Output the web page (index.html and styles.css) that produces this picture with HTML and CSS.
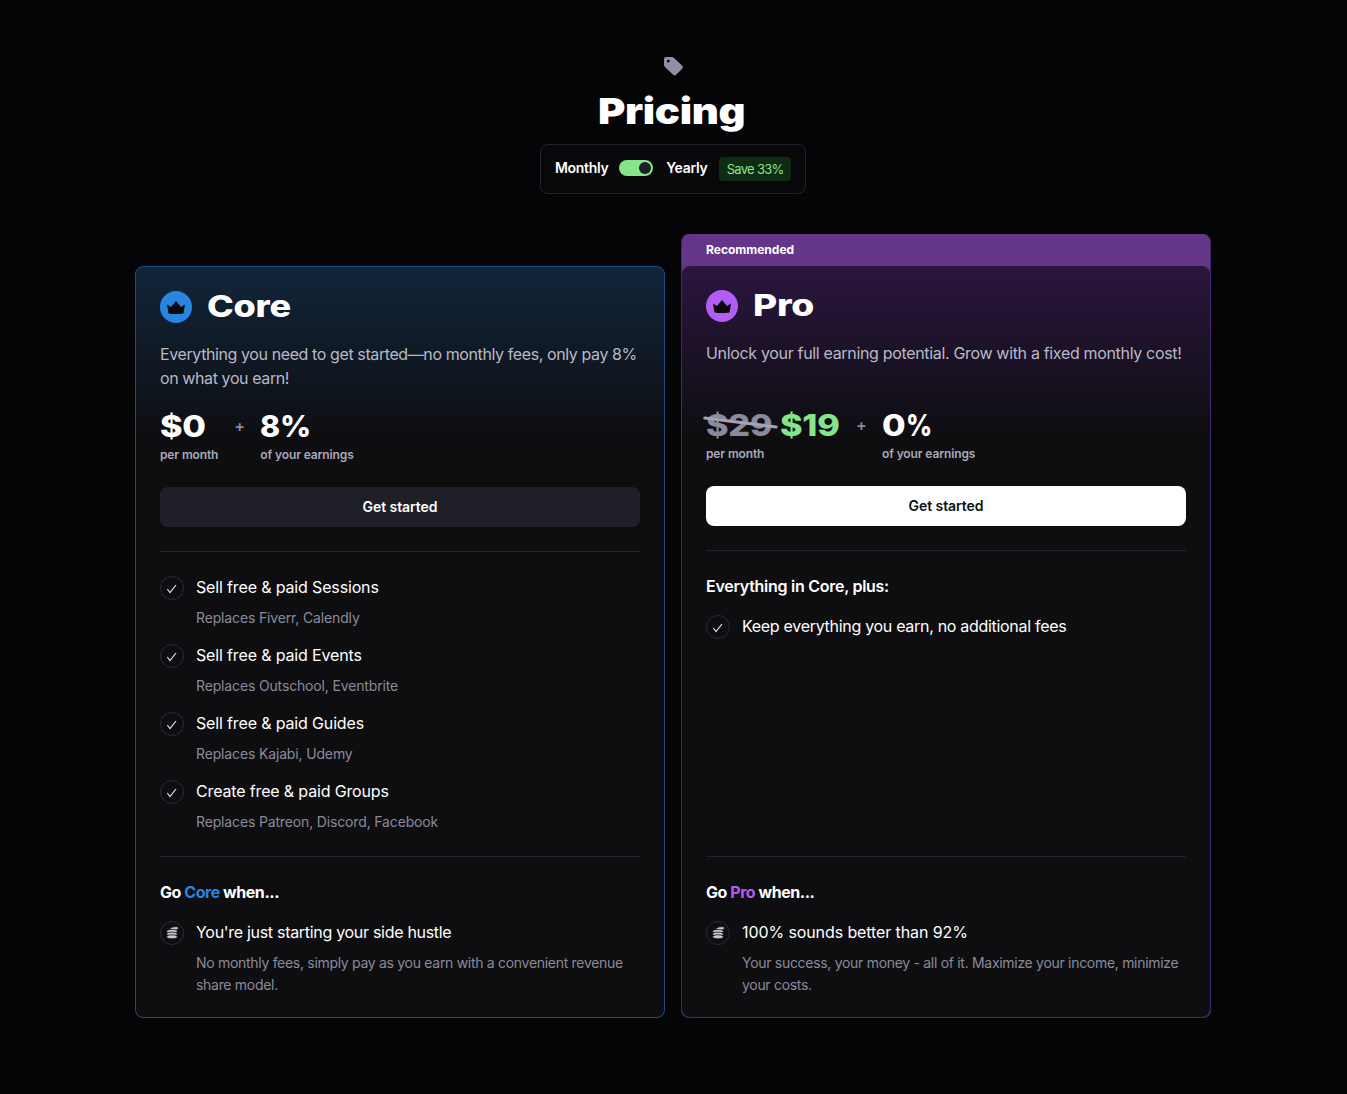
FILE: index.html
```html
<!DOCTYPE html>
<html lang="en">
<head>
<meta charset="utf-8">
<title>Pricing</title>
<link rel="stylesheet" href="styles.css">
</head>
<body>
<main class="page">
  <header class="head">
    <svg class="tag" width="20" height="20" viewBox="0 0 20 20"><path fill-rule="evenodd" d="M0 3a2 2 0 0 1 2-2h6a3 3 0 0 1 2 .9l8 7.600a2.400 2.400 0 0 1 0 3.400l-5.700 5.700a2.400 2.400 0 0 1-3.400 0L.9 11A3 3 0 0 1 0 9zM4.300 3.700a1.400 1.400 0 1 0 0 2.800 1.400 1.400 0 0 0 0-2.800z"/></svg>
    <h1 class="title"><span class="wide">Pricing</span></h1>
    <div class="billing">
      <span class="billing-label">Monthly</span>
      <span class="switch"><span class="knob"></span></span>
      <span class="billing-label yearly">Yearly</span>
      <span class="save">Save 33%</span>
    </div>
  </header>

  <section class="plans">
    <article class="card core">
      <div class="top">
        <div class="plan-name">
          <svg class="crown" width="32" height="32" viewBox="0 0 32 32"><circle class="disc-blue" cx="16" cy="16" r="16"/><path class="crown-shape" d="M8.500 22.500 7 13.500l4 2.500 5-6 5 6 4-2.500-1.500 9c-5 .7-10 .7-15 0z"/></svg>
          <h2 class="name"><span class="wide">Core</span></h2>
        </div>
        <p class="desc desc-core">Everything you need to get started—no monthly fees, only pay 8% on what you earn!</p>
        <div class="prices">
          <div class="price-block">
            <div class="amount"><span class="wide">$0</span></div>
            <div class="unit">per month</div>
          </div>
          <span class="plus">+</span>
          <div class="price-block">
            <div class="amount"><span class="narrow">8%</span></div>
            <div class="unit">of your earnings</div>
          </div>
        </div>
        <a class="btn btn-dark">Get started</a>
      </div>
      <hr class="rule">
      <ul class="features">
        <li class="feature"><div class="row row-tight"><svg class="tick" width="24" height="24" viewBox="0 0 24 24"><circle cx="12" cy="12" r="11.500"/><path d="m7.300 13 2.700 3.500 6-7.500"/></svg><span class="label">Sell free &amp; paid Sessions</span></div><p class="sub">Replaces Fiverr, Calendly</p></li>
        <li class="feature"><div class="row row-tight"><svg class="tick" width="24" height="24" viewBox="0 0 24 24"><circle cx="12" cy="12" r="11.500"/><path d="m7.300 13 2.700 3.500 6-7.500"/></svg><span class="label">Sell free &amp; paid Events</span></div><p class="sub">Replaces Outschool, Eventbrite</p></li>
        <li class="feature"><div class="row row-tight"><svg class="tick" width="24" height="24" viewBox="0 0 24 24"><circle cx="12" cy="12" r="11.500"/><path d="m7.300 13 2.700 3.500 6-7.500"/></svg><span class="label">Sell free &amp; paid Guides</span></div><p class="sub">Replaces Kajabi, Udemy</p></li>
        <li class="feature"><div class="row row-tight"><svg class="tick" width="24" height="24" viewBox="0 0 24 24"><circle cx="12" cy="12" r="11.500"/><path d="m7.300 13 2.700 3.500 6-7.500"/></svg><span class="label">Create free &amp; paid Groups</span></div><p class="sub">Replaces Patreon, Discord, Facebook</p></li>
      </ul>
      <div class="when">
        <hr class="rule rule-when">
        <h3 class="when-title">Go <span class="blue">Core</span> when...</h3>
        <div class="row"><svg class="coins" width="24" height="24" viewBox="0 0 24 24"><circle class="ring" cx="12" cy="12" r="11.500"/><g class="stack"><ellipse cx="14" cy="7.800" rx="4.500" ry="2" transform="rotate(-12 14 7.800)"/><ellipse cx="12" cy="10.400" rx="5.500" ry="2"/><ellipse cx="12" cy="13.100" rx="5.500" ry="2"/><ellipse cx="12" cy="15.800" rx="5.500" ry="2"/></g></svg><span class="label">You're just starting your side hustle</span></div>
        <p class="sub sub-long">No monthly fees, simply pay as you earn with a convenient revenue share model.</p>
      </div>
    </article>

    <article class="card pro">
      <div class="ribbon">Recommended</div>
      <div class="pro-body">
        <div class="top">
          <div class="plan-name">
            <svg class="crown" width="32" height="32" viewBox="0 0 32 32"><circle class="disc-purple" cx="16" cy="16" r="16"/><path class="crown-shape" d="M8.500 22.500 7 13.500l4 2.500 5-6 5 6 4-2.500-1.500 9c-5 .7-10 .7-15 0z"/></svg>
            <h2 class="name"><span class="wide">Pro</span></h2>
          </div>
          <p class="desc">Unlock your full earning potential. Grow with a fixed monthly cost!</p>
          <div class="prices">
            <div class="price-block">
              <div class="amount amount-pair">
                <span class="old"><span class="wide">$29</span><span class="strike"></span></span>
                <span class="new"><span class="wide">$19</span></span>
              </div>
              <div class="unit">per month</div>
            </div>
            <span class="plus">+</span>
            <div class="price-block">
              <div class="amount"><span class="wide zero">0</span><span class="narrow pct">%</span></div>
              <div class="unit">of your earnings</div>
            </div>
          </div>
          <a class="btn btn-light">Get started</a>
        </div>
        <hr class="rule">
        <h3 class="plus-title">Everything in Core, plus:</h3>
        <div class="row"><svg class="tick" width="24" height="24" viewBox="0 0 24 24"><circle cx="12" cy="12" r="11.500"/><path d="m7.300 13 2.700 3.500 6-7.500"/></svg><span class="label">Keep everything you earn, no additional fees</span></div>
        <div class="when when-pro">
          <hr class="rule rule-when">
          <h3 class="when-title">Go <span class="purple">Pro</span> when...</h3>
          <div class="row"><svg class="coins" width="24" height="24" viewBox="0 0 24 24"><circle class="ring" cx="12" cy="12" r="11.500"/><g class="stack"><ellipse cx="14" cy="7.800" rx="4.500" ry="2" transform="rotate(-12 14 7.800)"/><ellipse cx="12" cy="10.400" rx="5.500" ry="2"/><ellipse cx="12" cy="13.100" rx="5.500" ry="2"/><ellipse cx="12" cy="15.800" rx="5.500" ry="2"/></g></svg><span class="label label-num">100% sounds better than 92%</span></div>
          <p class="sub sub-long">Your success, your money - all of it. Maximize your income, minimize your costs.</p>
        </div>
      </div>
    </article>
  </section>
</main>
</body>
</html>
```

FILE: styles.css
```css
* { box-sizing: border-box; }
html, body { margin: 0; padding: 0; }
body {
  background: #050507;
  color: #fff;
  font-family: Inter, "Liberation Sans", sans-serif;
  font-size: 16px;
  letter-spacing: -0.3px;
}
h1, h2, h3, p, ul { margin: 0; padding: 0; }
ul { list-style: none; }

.page {
  width: 1076px;
  margin: 0 136px 0 135px;
  padding: 56px 0 76px;
}
.head {
  display: flex;
  flex-direction: column;
  align-items: center;
}
.tag { display: block; margin-left: 2px; fill: #8f8fa6; }
.wide {
  display: inline-block;
  font-weight: 800;
  transform: scaleX(1.14);
  transform-origin: left center;
}
.narrow {
  display: inline-block;
  font-weight: 800;
  transform: scaleX(1.01);
  transform-origin: left center;
}
.zero { margin-right: 3px; }
.pct { transform: scaleX(.85); }
.title {
  font-size: 36px;
  line-height: 44px;
  margin-top: 13px;
  margin-bottom: 11px;
  width: 150px;
  letter-spacing: -0.3px;
  font-weight: 900;
}
.title .wide { font-weight: 900; transform: scaleX(1.16); }
.billing {
  display: flex;
  align-items: center;
  width: 266px;
  height: 50px;
  padding: 0 14px;
  border: 1px solid #23232d;
  border-radius: 8px;
  background: #08080b;
}
.billing-label { padding-bottom: 3px; font-size: 14px; font-weight: 600; }
.switch {
  display: flex;
  justify-content: flex-end;
  align-items: center;
  width: 34px;
  height: 16px;
  margin: -2px 13px 0 11px;
  padding: 0 2px;
  border-radius: 8px;
  background: #86e58a;
}
.knob { width: 12px; height: 12px; border-radius: 50%; background: #1e1e28; }
.yearly { margin-right: 12px; }
.save {
  width: 72px;
  height: 24px;
  border-radius: 4px;
  background: #0f2b13;
  color: #86e58a;
  font-size: 13px;
  line-height: 24px;
  letter-spacing: -0.7px;
  text-align: center;
}

.plans {
  display: grid;
  grid-template-columns: 530px 530px;
  gap: 16px;
  align-items: end;
  margin-top: 40px;
}
.card { border-radius: 8px; border: 1px solid; }
.core {
  height: 752px;
  padding: 24px 24px 21px;
  display: flex;
  flex-direction: column;
  border-color: #1f4c7a;
  background: linear-gradient(180deg, #11253a 0, #0e0e11 170px);
}
.pro {
  height: 784px;
  display: flex;
  flex-direction: column;
  border-color: #43286a;
  border-top-color: #643688;
  background: #643688;
}
.ribbon {
  height: 31px;
  padding-left: 24px;
  font-size: 12px;
  font-weight: 700;
  line-height: 29px;
  letter-spacing: 0;
}
.pro-body {
  flex: 1;
  display: flex;
  flex-direction: column;
  padding: 24px 24px 21px;
  border-radius: 8px;
  background: linear-gradient(180deg, #2a163e 0, #0e0e11 170px);
}

.plan-name { display: flex; align-items: center; gap: 15px; height: 32px; }
.crown { display: block; flex: none; }
.disc-blue { fill: #2986e0; }
.disc-purple { fill: #b25ef5; }
.crown-shape { fill: #0a0a0e; }
.name { padding-bottom: 2px; font-size: 30px; line-height: 32px; letter-spacing: -0.2px; }
.name .wide { transform: scaleX(1.2); }
.pro .name .wide { transform: scaleX(1.24); }
.desc {
  margin-top: 19px;
  min-height: 48px;
  color: #b9b9c6;
  line-height: 24px;
  letter-spacing: -0.33px;
}
.desc-core { letter-spacing: -0.4px; }
.prices { display: flex; align-items: flex-start; gap: 17px; margin-top: 18px; }
.amount {
  font-size: 30px;
  line-height: 36px;
  height: 36px;
  letter-spacing: -0.2px;
}
.amount-pair { display: flex; width: 134px; }
.old { position: relative; width: 74px; color: #8a8a9c; }
.new { color: #86e58a; }
.strike {
  position: absolute;
  left: -3px;
  top: 14px;
  width: 75px;
  height: 3px;
  border-radius: 2px;
  background: #a3a3b4;
  transform: rotate(7deg);
}
.unit {
  margin-top: 3px;
  color: #a9a9b9;
  font-size: 12px;
  font-weight: 600;
  line-height: 16px;
  letter-spacing: -0.12px;
}
.plus { width: 8px; margin: 6px 1px 0 -1px; color: #8a8a9c; font-size: 16px; font-weight: 600; line-height: 24px; text-align: center; }
.btn {
  display: block;
  height: 40px;
  margin-top: 24px;
  border-radius: 8px;
  font-size: 14px;
  font-weight: 600;
  line-height: 40px;
  letter-spacing: -0.05px;
  text-align: center;
}
.btn-dark { background: #1e1f27; color: #fff; }
.btn-light { background: #fff; color: #0e0f12; }
.rule { height: 1px; margin: 24px 0 0; border: 0; background: #23232b; }

.features { display: flex; flex-direction: column; gap: 15px; margin-top: 24px; }
.row { display: flex; align-items: center; gap: 12px; line-height: 24px; }
.row-tight { letter-spacing: -0.15px; }
.label { padding-bottom: 2px; line-height: 22px; }
.label-num { letter-spacing: -0.1px; }
.tick, .coins { display: block; flex: none; fill: none; }
.tick circle, .ring { stroke: #2c2c37; fill: none; }
.tick path { stroke: #e8e8ee; stroke-width: 1.200; fill: none; }
.stack ellipse { fill: #c9c9d4; stroke: #0e0e11; stroke-width: .8; }
.sub {
  margin-top: 7px;
  padding-left: 36px;
  color: #8a8a9c;
  font-size: 14px;
  line-height: 22px;
  letter-spacing: -0.15px;
}
.sub-long { letter-spacing: -0.3px; }
.when { margin-top: auto; }
.rule-when { margin-top: 0; }
.when-title { margin: 23px 0 17px; font-size: 16px; font-weight: 700; line-height: 24px; letter-spacing: -0.45px; }
.plus-title { margin: 23px 0 17px; font-size: 16px; font-weight: 600; line-height: 24px; letter-spacing: -0.27px; }
.blue { color: #2986e0; }
.purple { color: #b25ef5; }
```
